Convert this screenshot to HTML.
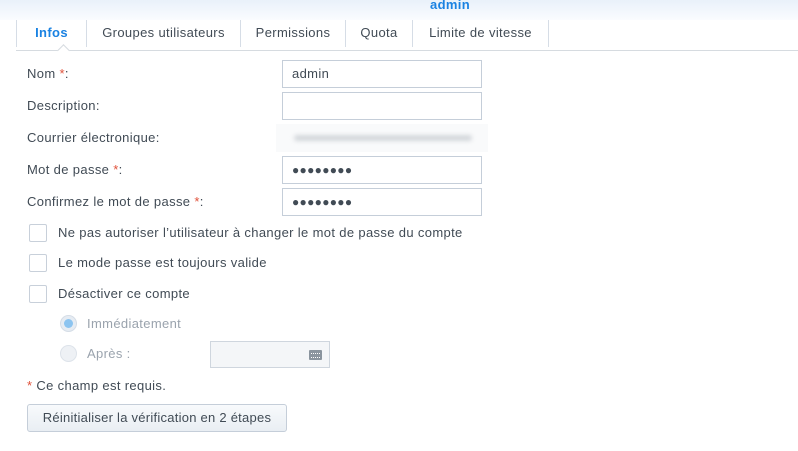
<!DOCTYPE html>
<html><head><meta charset="utf-8"><style>
*{margin:0;padding:0;box-sizing:border-box}
body{width:798px;height:451px;background:#fff;font-family:"Liberation Sans",sans-serif;font-size:13px;letter-spacing:0.35px;color:#414b55;position:relative;overflow:hidden}
.hdr{position:absolute;left:0;top:0;width:798px;height:20px;background:linear-gradient(#e9f1fa,#fafcff)}
.title{position:absolute;left:430px;top:-3px;font-weight:bold;color:#1a82e2;font-size:13px}
.tabs{position:absolute;left:16px;top:20px;height:31px;width:782px;border-bottom:1px solid #d6dbe0}
.tab{position:absolute;top:0;height:27px;line-height:25px;color:#414b55;text-align:center;border-left:1px solid #d6dde6}
.a{position:absolute;white-space:nowrap}
.in{position:absolute;left:282px;width:200px;height:28px;border:1px solid #c5ced9;background:#fff;padding-left:9px;line-height:26px}
.cb{position:absolute;left:29px;width:18px;height:18px;border:1px solid #c8d0da;background:#fff;border-radius:2px}
.req{color:#e0513a}
.dots{font-size:12px;letter-spacing:0.3px;color:#414b55}
</style></head><body>
<div class="hdr"></div><div class="title">admin</div>
<div class="tabs">
<div class="tab" style="left:0;width:70px;color:#1a82e2;font-weight:bold">Infos</div>
<div class="tab" style="left:70px;width:154px">Groupes utilisateurs</div>
<div class="tab" style="left:224px;width:105px">Permissions</div>
<div class="tab" style="left:329px;width:67px">Quota</div>
<div class="tab" style="left:396px;width:136px">Limite de vitesse</div>
<div class="tab" style="left:532px;width:1px"></div>
<div style="position:absolute;left:43px;top:26px;width:9px;height:9px;background:#fff;border-left:1px solid #d6dbe0;border-top:1px solid #d6dbe0;transform:rotate(45deg)"></div>
</div>
<div class="a" style="left:27px;top:66px">Nom <span class="req">*</span>:</div>
<div class="a" style="left:27px;top:98px">Description:</div>
<div class="a" style="left:27px;top:130px">Courrier électronique:</div>
<div class="a" style="left:27px;top:162px">Mot de passe <span class="req">*</span>:</div>
<div class="a" style="left:27px;top:194px">Confirmez le mot de passe <span class="req">*</span>:</div>
<div class="in" style="top:60px">admin</div>
<div class="in" style="top:92px"></div>
<div class="a" style="left:276px;top:124px;width:212px;height:28px;background:#f9fafb"><div style="margin:11px 0 0 18px;width:178px;height:6px;background:#d3d7db;border-radius:3px;filter:blur(2px)"></div></div>
<div class="in dots" style="top:156px">●●●●●●●●</div>
<div class="in dots" style="top:188px">●●●●●●●●</div>
<div class="cb" style="top:224px"></div><div class="a" style="left:58px;top:225px">Ne pas autoriser l’utilisateur à changer le mot de passe du compte</div>
<div class="cb" style="top:254px"></div><div class="a" style="left:58px;top:255px">Le mode passe est toujours valide</div>
<div class="cb" style="top:285px"></div><div class="a" style="left:58px;top:286px">Désactiver ce compte</div>
<div class="a" style="left:60px;top:315px;width:17px;height:17px;border-radius:50%;background:#e6ecf3;border:1px solid #d5dde6"><div style="margin:3px;width:9px;height:9px;border-radius:50%;background:#8cc4f0"></div></div>
<div class="a" style="left:87px;top:316px;color:#9aa3ad">Immédiatement</div>
<div class="a" style="left:60px;top:345px;width:17px;height:17px;border-radius:50%;background:#eef1f5;border:1px solid #dde3ea"></div>
<div class="a" style="left:87px;top:346px;color:#9aa3ad">Après :</div>
<div class="a" style="left:210px;top:341px;width:120px;height:27px;border:1px solid #cfd6de;background:#f4f6f8">
<div style="position:absolute;right:7px;top:8px;width:13px;height:10px;background:#8a949e;border-radius:1px"><div style="margin:3px 2px;height:5px;border-top:1px dotted #fff;border-bottom:1px dotted #fff"></div></div></div>
<div class="a" style="left:27px;top:378px"><span class="req">*</span> Ce champ est requis.</div>
<div class="a" style="left:27px;top:404px;width:260px;height:28px;border:1px solid #c5ced9;border-radius:3px;background:linear-gradient(#f8fafc,#e9eef3);text-align:center;line-height:26px;letter-spacing:0.25px">Réinitialiser la vérification en 2 étapes</div>
</body></html>
